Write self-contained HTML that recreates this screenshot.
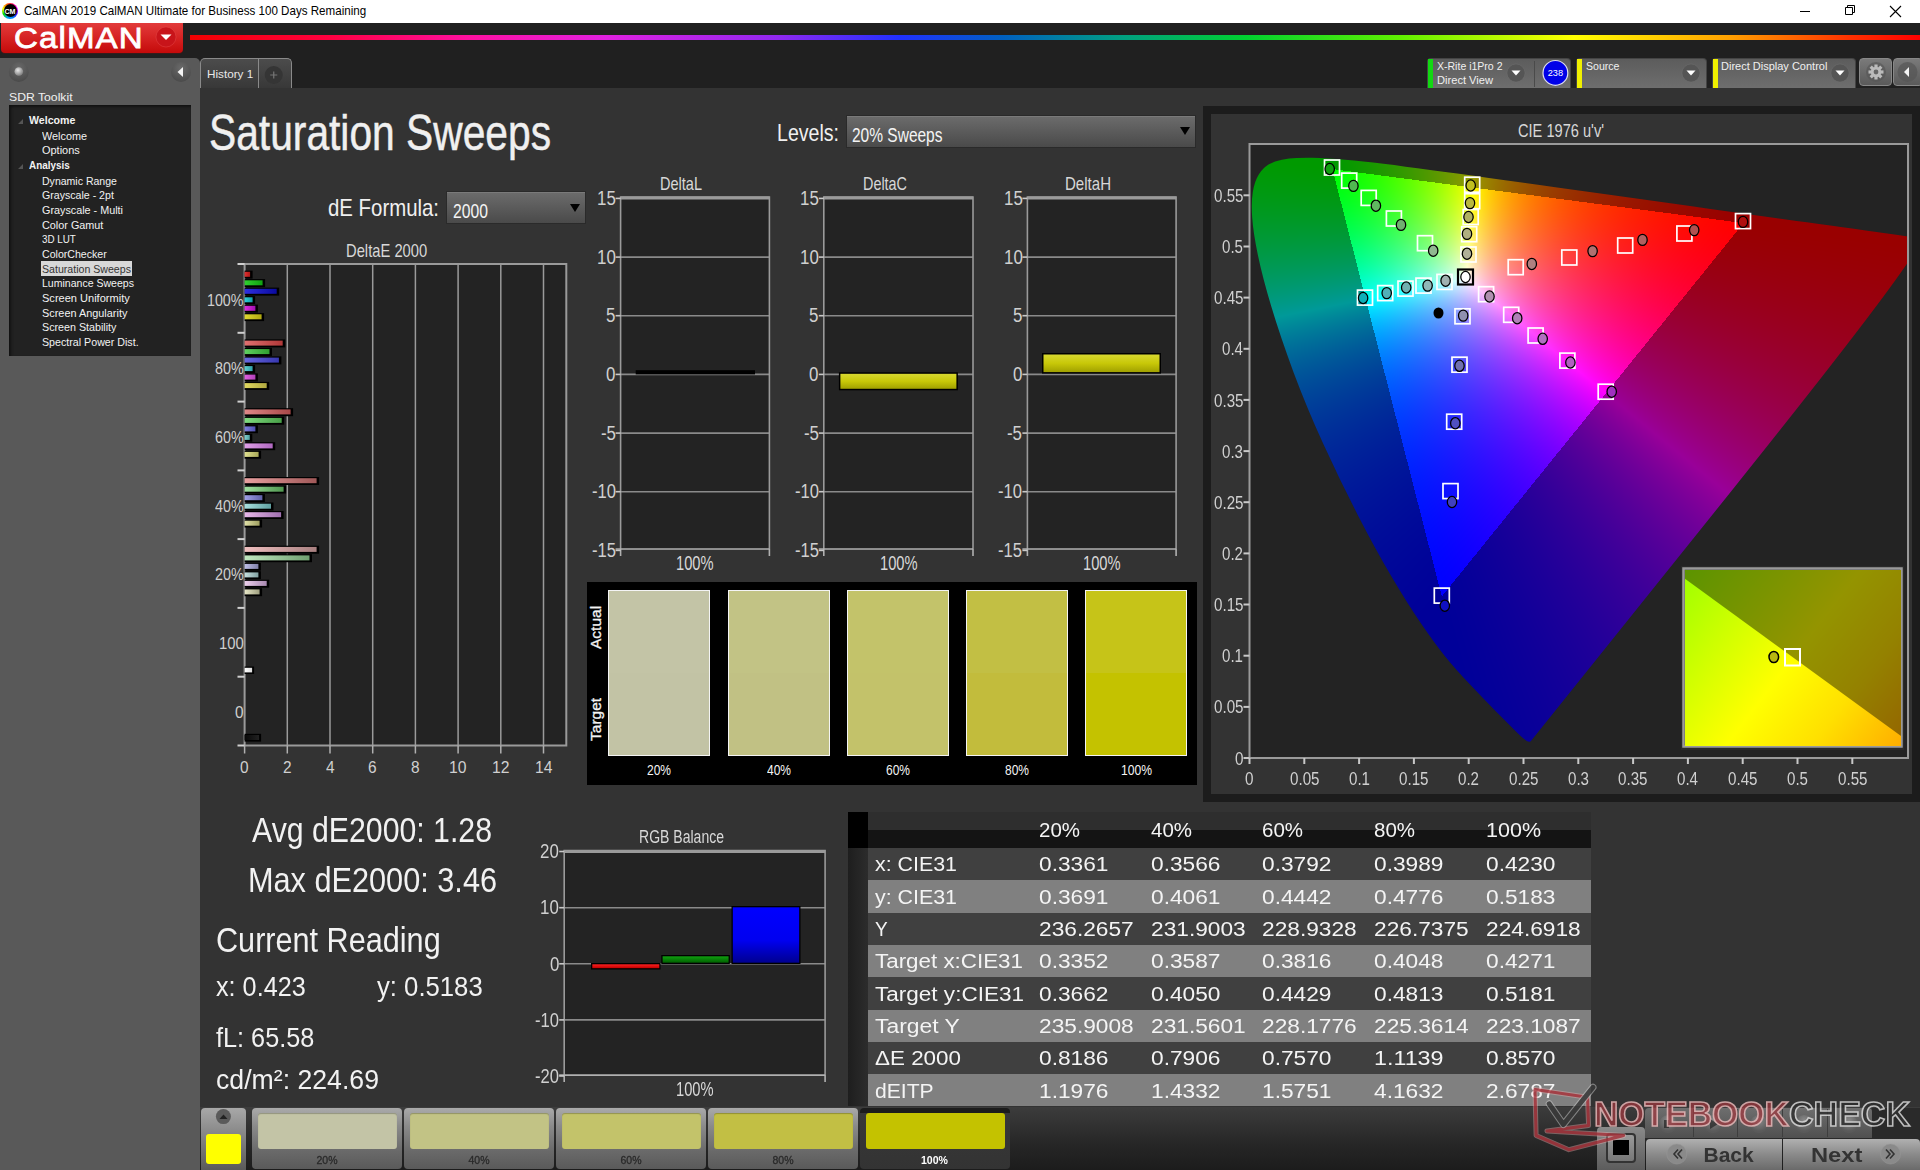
<!DOCTYPE html>
<html><head><meta charset="utf-8">
<style>
*{margin:0;padding:0;box-sizing:border-box}
html,body{width:1920px;height:1170px;overflow:hidden;background:#202020;font-family:"Liberation Sans",sans-serif;color:#eee;position:relative}
.a{position:absolute}
.t{position:absolute;white-space:nowrap;line-height:1}
svg{position:absolute;overflow:visible}
</style></head><body>
<div class="a" style="left:0px;top:0px;width:1920px;height:23px;background:#fff;"></div>
<div class="a" style="left:2px;top:2.8px;width:16px;height:16px;border-radius:50%;background:conic-gradient(from 200deg,#00a0ff,#00e000,#ffff00,#ff6000,#ff0060,#ff00ff,#4000ff,#0080ff,#00a0ff)"></div>
<div class="a" style="left:3.5px;top:4.3px;width:13px;height:13px;border-radius:50%;background:#000"></div>
<svg style="left:0;top:0" width="24" height="23"><text x="10" y="13.8" font-size="7.2" font-weight="bold" fill="#fff" text-anchor="middle" font-family="Liberation Sans" textLength="11" lengthAdjust="spacingAndGlyphs">CM</text></svg>
<div class="t" style="left:23.5px;top:5.3px;font-size:12.2px;color:#000;transform:scaleX(0.9513);transform-origin:0 0;">CalMAN 2019 CalMAN Ultimate for Business 100 Days Remaining</div>
<svg style="left:1790px;top:0" width="130" height="23"><path d="M10 11.5h10" stroke="#000" stroke-width="1"/><path d="M55.5 7.5h7v7h-7z M57.5 7.5v-2h7v7h-2" fill="none" stroke="#000" stroke-width="1"/><path d="M100 6l11 11M111 6l-11 11" stroke="#000" stroke-width="1.1"/></svg>
<div class="a" style="left:0px;top:23px;width:1920px;height:35px;background:#202020;"></div>
<div class="a" style="left:1px;top:23px;width:182px;height:30px;border-radius:0 0 4px 4px;background:linear-gradient(#e23b3b,#d42020 55%,#c40a0a);box-shadow:0 1px 0 #3a1a1a"></div>
<div class="t" style="left:13.8px;top:22.7px;font-size:30px;color:#fff;transform:scaleX(1.1013);transform-origin:0 0;letter-spacing:1px;-webkit-text-stroke:0.8px #fff;">CalMAN</div>
<svg style="left:155px;top:26px" width="22" height="22"><circle cx="11" cy="11" r="10" fill="#c8141a"/><circle cx="11" cy="11" r="10" fill="none" stroke="#e85050" stroke-width="0.8" opacity=".5"/><path d="M5.5 8.5h11l-5.5 5.5z" fill="#fff"/></svg>
<div class="a" style="left:190px;top:35px;width:1730px;height:5px;background:linear-gradient(90deg,#f00000 0%,#ff0040 8%,#ff10a0 16%,#e020e0 24%,#9028f0 34%,#2030ff 41%,#0060c0 47%,#00a080 54%,#00d030 61%,#60f000 70%,#ffff00 80%,#ffa000 89%,#ff3000 96%,#ff0000 100%)"></div>
<div class="a" style="left:0;top:58px;width:200px;height:1112px;background:#595959;border-radius:0 5px 0 0"></div>
<svg style="left:0;top:58px" width="200" height="30"><defs><radialGradient id="btn" cx=".5" cy=".3" r=".7"><stop offset="0" stop-color="#6a6a6a"/><stop offset="1" stop-color="#4a4a4a"/></radialGradient><radialGradient id="ball" cx=".4" cy=".35" r=".6"><stop offset="0" stop-color="#e8e8e8"/><stop offset="1" stop-color="#888"/></radialGradient></defs><circle cx="18.8" cy="14" r="10" fill="url(#btn)"/><circle cx="18.8" cy="13.5" r="4.3" fill="url(#ball)"/><circle cx="181" cy="14" r="10" fill="url(#btn)"/><path d="M177.5 14l5.5-5v10z" fill="#f4f4f4"/></svg>
<div class="t" style="left:9.0px;top:90.7px;font-size:11.6px;color:#f0f0f0;transform:scaleX(1.0532);transform-origin:0 0;">SDR Toolkit</div>
<div class="a" style="left:9px;top:105px;width:182px;height:251px;background:#222;box-shadow:inset 2px 2px 3px #111"></div>
<svg style="left:17px;top:116px" width="10" height="60"><path d="M1 8l5-5v5z M1 53l5-5v5z" fill="#555"/></svg>
<div class="t" style="left:29.0px;top:115.0px;font-size:10.6px;color:#f2f2f2;font-weight:bold;">Welcome</div>
<div class="t" style="left:42.0px;top:131.0px;font-size:10.6px;color:#f2f2f2;transform:scaleX(1.0231);transform-origin:0 0;">Welcome</div>
<div class="t" style="left:42.0px;top:145.0px;font-size:10.6px;color:#f2f2f2;transform:scaleX(1.0347);transform-origin:0 0;">Options</div>
<div class="t" style="left:29.0px;top:160.0px;font-size:10.6px;color:#f2f2f2;font-weight:bold;transform:scaleX(0.9335);transform-origin:0 0;">Analysis</div>
<div class="t" style="left:42.0px;top:176.0px;font-size:10.6px;color:#f2f2f2;transform:scaleX(0.9945);transform-origin:0 0;">Dynamic Range</div>
<div class="t" style="left:42.0px;top:190.3px;font-size:10.6px;color:#f2f2f2;">Grayscale - 2pt</div>
<div class="t" style="left:42.0px;top:205.0px;font-size:10.6px;color:#f2f2f2;transform:scaleX(1.0186);transform-origin:0 0;">Grayscale - Multi</div>
<div class="t" style="left:42.0px;top:219.9px;font-size:10.6px;color:#f2f2f2;transform:scaleX(1.0219);transform-origin:0 0;">Color Gamut</div>
<div class="t" style="left:42.0px;top:233.9px;font-size:10.6px;color:#f2f2f2;transform:scaleX(0.9255);transform-origin:0 0;">3D LUT</div>
<div class="t" style="left:42.0px;top:248.8px;font-size:10.6px;color:#f2f2f2;">ColorChecker</div>
<div class="a" style="left:41px;top:261px;width:91px;height:15px;background:#d8d8d8;"></div>
<div class="t" style="left:42.0px;top:263.9px;font-size:10.6px;color:#333;">Saturation Sweeps</div>
<div class="t" style="left:42.0px;top:278.0px;font-size:10.6px;color:#f2f2f2;transform:scaleX(0.9944);transform-origin:0 0;">Luminance Sweeps</div>
<div class="t" style="left:42.0px;top:292.8px;font-size:10.6px;color:#f2f2f2;transform:scaleX(1.0423);transform-origin:0 0;">Screen Uniformity</div>
<div class="t" style="left:42.0px;top:307.7px;font-size:10.6px;color:#f2f2f2;transform:scaleX(1.0279);transform-origin:0 0;">Screen Angularity</div>
<div class="t" style="left:42.0px;top:322.0px;font-size:10.6px;color:#f2f2f2;transform:scaleX(1.0116);transform-origin:0 0;">Screen Stability</div>
<div class="t" style="left:42.0px;top:336.6px;font-size:10.6px;color:#f2f2f2;transform:scaleX(1.0070);transform-origin:0 0;">Spectral Power Dist.</div>
<div class="a" style="left:200px;top:58px;width:92px;height:30px;background:linear-gradient(#4c4c4c,#383838);border:1px solid #8a8a8a;border-bottom:none;border-radius:5px 5px 0 0"></div>
<div class="a" style="left:258px;top:59px;width:1px;height:29px;background:#8a8a8a;"></div>
<div class="t" style="left:206.6px;top:68.5px;font-size:11.3px;color:#e8e8e8;transform:scaleX(1.0363);transform-origin:0 0;">History 1</div>
<svg style="left:264px;top:65px" width="20" height="20"><circle cx="9.75" cy="10" r="9" fill="#353535"/><path d="M9.75 6.5v7M6.25 10h7" stroke="#777" stroke-width="1.2"/></svg>
<div class="a" style="left:1427px;top:58px;width:144px;height:30px;background:linear-gradient(#5c5c5c,#6e6e6e);border-radius:4px 4px 0 0;border:1px solid #444;border-bottom:none"></div>
<div class="a" style="left:1428px;top:59px;width:5px;height:29px;background:#12d812;"></div>
<svg style="left:1504.5px;top:62px" width="22" height="22"><circle cx="11" cy="11" r="9" fill="#555"/><circle cx="11" cy="11" r="9" fill="none" stroke="#777" stroke-width=".6" opacity=".6"/><path d="M6.5 8.5h9l-4.5 5z" fill="#fff"/></svg>
<div class="a" style="left:1534px;top:61px;width:1px;height:26px;background:#4a4a4a;"></div>
<svg style="left:1541px;top:59px" width="30" height="28"><circle cx="14.4" cy="13.9" r="12.4" fill="#0000e8" stroke="#dde" stroke-width="1.2"/><text x="14.4" y="17.3" font-size="9.2" fill="#fff" text-anchor="middle" font-family="Liberation Sans">238</text></svg>
<div class="t" style="left:1437.0px;top:61.2px;font-size:11px;color:#f0f0f0;transform:scaleX(0.9566);transform-origin:0 0;">X-Rite i1Pro 2</div>
<div class="t" style="left:1437.0px;top:74.7px;font-size:11px;color:#f0f0f0;transform:scaleX(1.0104);transform-origin:0 0;">Direct View</div>
<div class="a" style="left:1576px;top:58px;width:131px;height:30px;background:linear-gradient(#5c5c5c,#6e6e6e);border-radius:4px 4px 0 0;border:1px solid #444;border-bottom:none"></div>
<div class="a" style="left:1577px;top:59px;width:5px;height:29px;background:#f0f000;"></div>
<svg style="left:1679.5px;top:62px" width="22" height="22"><circle cx="11" cy="11" r="9" fill="#555"/><circle cx="11" cy="11" r="9" fill="none" stroke="#777" stroke-width=".6" opacity=".6"/><path d="M6.5 8.5h9l-4.5 5z" fill="#fff"/></svg>
<div class="t" style="left:1585.5px;top:61.2px;font-size:11px;color:#f0f0f0;transform:scaleX(0.9611);transform-origin:0 0;">Source</div>
<div class="a" style="left:1712px;top:58px;width:144px;height:30px;background:linear-gradient(#5c5c5c,#6e6e6e);border-radius:4px 4px 0 0;border:1px solid #444;border-bottom:none"></div>
<div class="a" style="left:1713px;top:59px;width:5px;height:29px;background:#f0f000;"></div>
<svg style="left:1828.5px;top:62px" width="22" height="22"><circle cx="11" cy="11" r="9" fill="#555"/><circle cx="11" cy="11" r="9" fill="none" stroke="#777" stroke-width=".6" opacity=".6"/><path d="M6.5 8.5h9l-4.5 5z" fill="#fff"/></svg>
<div class="t" style="left:1721.0px;top:61.2px;font-size:11px;color:#f0f0f0;">Direct Display Control</div>
<div class="a" style="left:1859px;top:58px;width:33px;height:28px;background:linear-gradient(#7a7a7a,#5a5a5a);border:1px solid #888;border-radius:4px"></div>
<svg style="left:1862px;top:59px" width="28" height="28"><circle cx="14" cy="13" r="10" fill="#555" opacity=".6"/><g transform="translate(14 13)" fill="#bbb"><circle r="5.2"/><g id="tth"><rect x="-1.6" y="-7.5" width="3.2" height="3.4"/></g><use href="#tth" transform="rotate(45)"/><use href="#tth" transform="rotate(90)"/><use href="#tth" transform="rotate(135)"/><use href="#tth" transform="rotate(180)"/><use href="#tth" transform="rotate(225)"/><use href="#tth" transform="rotate(270)"/><use href="#tth" transform="rotate(315)"/><circle r="2.4" fill="#666"/></g></svg>
<div class="a" style="left:1893px;top:58px;width:30px;height:28px;background:linear-gradient(#7a7a7a,#5a5a5a);border:1px solid #888;border-radius:4px"></div>
<svg style="left:1895px;top:59px" width="25" height="28"><circle cx="12.5" cy="13" r="10" fill="#555" opacity=".7"/><path d="M9 13l5-5v10z" fill="#f4f4f4"/></svg>
<div class="a" style="left:200px;top:88px;width:1720px;height:1019px;background:#333"></div>
<div class="t" style="left:208.5px;top:107.7px;font-size:50.5px;color:#f0f0f0;transform:scaleX(0.8068);transform-origin:0 0;-webkit-text-stroke:0.5px #f0f0f0;">Saturation Sweeps</div>
<div class="t" style="left:328.0px;top:196.3px;font-size:24px;color:#f0f0f0;transform:scaleX(0.8492);transform-origin:0 0;">dE Formula:</div>
<div class="a" style="left:446px;top:191px;width:140px;height:33px;background:linear-gradient(#6c6c6c,#4a4a4a);border:1px solid #2a2a2a;box-shadow:inset 0 1px 0 #7a7a7a"></div>
<div class="t" style="left:452.5px;top:202.0px;font-size:19.6px;color:#f4f4f4;transform:scaleX(0.8027);transform-origin:0 0;">2000</div>
<svg style="left:569px;top:203px" width="12" height="10"><path d="M1 1h10l-5 8z" fill="#000"/></svg>
<div class="t" style="left:776.9px;top:120.7px;font-size:24px;color:#f0f0f0;transform:scaleX(0.8153);transform-origin:0 0;">Levels:</div>
<div class="a" style="left:846px;top:115px;width:350px;height:33px;background:linear-gradient(#6c6c6c,#4a4a4a);border:1px solid #2a2a2a;box-shadow:inset 0 1px 0 #7a7a7a"></div>
<div class="t" style="left:852.3px;top:125.0px;font-size:20px;color:#f4f4f4;transform:scaleX(0.7752);transform-origin:0 0;">20% Sweeps</div>
<svg style="left:1179px;top:126px" width="12" height="10"><path d="M1 1h10l-5 8z" fill="#000"/></svg>
<div class="t" style="left:346.3px;top:242.9px;font-size:17.9px;color:#d8d8d8;transform:scaleX(0.8247);transform-origin:0 0;">DeltaE 2000</div>
<svg style="left:0;top:0" width="1920" height="1170"><rect x="244.6" y="264" width="321.69999999999993" height="481.5" fill="#232323"/><path d="M287.3 264V745.5" stroke="#9a9a9a" stroke-width="1.5"/><path d="M330.0 264V745.5" stroke="#9a9a9a" stroke-width="1.5"/><path d="M372.7 264V745.5" stroke="#9a9a9a" stroke-width="1.5"/><path d="M415.4 264V745.5" stroke="#9a9a9a" stroke-width="1.5"/><path d="M458.1 264V745.5" stroke="#9a9a9a" stroke-width="1.5"/><path d="M500.8 264V745.5" stroke="#9a9a9a" stroke-width="1.5"/><path d="M543.5 264V745.5" stroke="#9a9a9a" stroke-width="1.5"/><path d="M244.6 264H566.3V745.5H244.6Z" fill="none" stroke="#9a9a9a" stroke-width="2"/><path d="M237.5 264.0H244.6" stroke="#d0d0d0" stroke-width="2"/><path d="M237.5 332.8H244.6" stroke="#d0d0d0" stroke-width="2"/><path d="M237.5 401.6H244.6" stroke="#d0d0d0" stroke-width="2"/><path d="M237.5 470.4H244.6" stroke="#d0d0d0" stroke-width="2"/><path d="M237.5 539.1H244.6" stroke="#d0d0d0" stroke-width="2"/><path d="M237.5 607.9H244.6" stroke="#d0d0d0" stroke-width="2"/><path d="M237.5 676.7H244.6" stroke="#d0d0d0" stroke-width="2"/><path d="M237.5 745.5H244.6" stroke="#d0d0d0" stroke-width="2"/><path d="M244.6 745.5v8" stroke="#b0b0b0" stroke-width="1.5"/><path d="M287.3 745.5v8" stroke="#b0b0b0" stroke-width="1.5"/><path d="M330.0 745.5v8" stroke="#b0b0b0" stroke-width="1.5"/><path d="M372.7 745.5v8" stroke="#b0b0b0" stroke-width="1.5"/><path d="M415.4 745.5v8" stroke="#b0b0b0" stroke-width="1.5"/><path d="M458.1 745.5v8" stroke="#b0b0b0" stroke-width="1.5"/><path d="M500.8 745.5v8" stroke="#b0b0b0" stroke-width="1.5"/><path d="M543.5 745.5v8" stroke="#b0b0b0" stroke-width="1.5"/><defs><linearGradient id="bg00" x1="0" x2="1" y1="0" y2="0"><stop offset="0" stop-color="#e03030"/><stop offset="1" stop-color="#b01818"/></linearGradient><linearGradient id="bg01" x1="0" x2="1" y1="0" y2="0"><stop offset="0" stop-color="#30d030"/><stop offset="1" stop-color="#10a010"/></linearGradient><linearGradient id="bg02" x1="0" x2="1" y1="0" y2="0"><stop offset="0" stop-color="#3030e0"/><stop offset="1" stop-color="#0a0aa0"/></linearGradient><linearGradient id="bg03" x1="0" x2="1" y1="0" y2="0"><stop offset="0" stop-color="#30d0d8"/><stop offset="1" stop-color="#10a0a8"/></linearGradient><linearGradient id="bg04" x1="0" x2="1" y1="0" y2="0"><stop offset="0" stop-color="#e030e0"/><stop offset="1" stop-color="#a010b0"/></linearGradient><linearGradient id="bg05" x1="0" x2="1" y1="0" y2="0"><stop offset="0" stop-color="#e0d830"/><stop offset="1" stop-color="#b0a810"/></linearGradient><linearGradient id="bg10" x1="0" x2="1" y1="0" y2="0"><stop offset="0" stop-color="#e07070"/><stop offset="1" stop-color="#b03838"/></linearGradient><linearGradient id="bg11" x1="0" x2="1" y1="0" y2="0"><stop offset="0" stop-color="#60d060"/><stop offset="1" stop-color="#30a030"/></linearGradient><linearGradient id="bg12" x1="0" x2="1" y1="0" y2="0"><stop offset="0" stop-color="#6868e0"/><stop offset="1" stop-color="#3838b0"/></linearGradient><linearGradient id="bg13" x1="0" x2="1" y1="0" y2="0"><stop offset="0" stop-color="#60d0d0"/><stop offset="1" stop-color="#30a0a8"/></linearGradient><linearGradient id="bg14" x1="0" x2="1" y1="0" y2="0"><stop offset="0" stop-color="#e060e0"/><stop offset="1" stop-color="#b040b8"/></linearGradient><linearGradient id="bg15" x1="0" x2="1" y1="0" y2="0"><stop offset="0" stop-color="#e0d860"/><stop offset="1" stop-color="#b0a840"/></linearGradient><linearGradient id="bg20" x1="0" x2="1" y1="0" y2="0"><stop offset="0" stop-color="#e08888"/><stop offset="1" stop-color="#a84848"/></linearGradient><linearGradient id="bg21" x1="0" x2="1" y1="0" y2="0"><stop offset="0" stop-color="#80dc80"/><stop offset="1" stop-color="#48a048"/></linearGradient><linearGradient id="bg22" x1="0" x2="1" y1="0" y2="0"><stop offset="0" stop-color="#8080e0"/><stop offset="1" stop-color="#5050b0"/></linearGradient><linearGradient id="bg23" x1="0" x2="1" y1="0" y2="0"><stop offset="0" stop-color="#80d0d0"/><stop offset="1" stop-color="#50a0a0"/></linearGradient><linearGradient id="bg24" x1="0" x2="1" y1="0" y2="0"><stop offset="0" stop-color="#e0a0e8"/><stop offset="1" stop-color="#b068c0"/></linearGradient><linearGradient id="bg25" x1="0" x2="1" y1="0" y2="0"><stop offset="0" stop-color="#e0e090"/><stop offset="1" stop-color="#a8a858"/></linearGradient><linearGradient id="bg30" x1="0" x2="1" y1="0" y2="0"><stop offset="0" stop-color="#e8a0a0"/><stop offset="1" stop-color="#a05858"/></linearGradient><linearGradient id="bg31" x1="0" x2="1" y1="0" y2="0"><stop offset="0" stop-color="#a0e0a0"/><stop offset="1" stop-color="#509850"/></linearGradient><linearGradient id="bg32" x1="0" x2="1" y1="0" y2="0"><stop offset="0" stop-color="#a0a0e8"/><stop offset="1" stop-color="#6060a8"/></linearGradient><linearGradient id="bg33" x1="0" x2="1" y1="0" y2="0"><stop offset="0" stop-color="#a8e0e0"/><stop offset="1" stop-color="#60a0a0"/></linearGradient><linearGradient id="bg34" x1="0" x2="1" y1="0" y2="0"><stop offset="0" stop-color="#e8b8e8"/><stop offset="1" stop-color="#a070b0"/></linearGradient><linearGradient id="bg35" x1="0" x2="1" y1="0" y2="0"><stop offset="0" stop-color="#e0e0a8"/><stop offset="1" stop-color="#a0a060"/></linearGradient><linearGradient id="bg40" x1="0" x2="1" y1="0" y2="0"><stop offset="0" stop-color="#f0c0c0"/><stop offset="1" stop-color="#a88080"/></linearGradient><linearGradient id="bg41" x1="0" x2="1" y1="0" y2="0"><stop offset="0" stop-color="#c0e8c0"/><stop offset="1" stop-color="#70a070"/></linearGradient><linearGradient id="bg42" x1="0" x2="1" y1="0" y2="0"><stop offset="0" stop-color="#c0c0e8"/><stop offset="1" stop-color="#8080a8"/></linearGradient><linearGradient id="bg43" x1="0" x2="1" y1="0" y2="0"><stop offset="0" stop-color="#c8e0e0"/><stop offset="1" stop-color="#80a0a0"/></linearGradient><linearGradient id="bg44" x1="0" x2="1" y1="0" y2="0"><stop offset="0" stop-color="#ecd0ec"/><stop offset="1" stop-color="#a888b0"/></linearGradient><linearGradient id="bg45" x1="0" x2="1" y1="0" y2="0"><stop offset="0" stop-color="#e8e8c8"/><stop offset="1" stop-color="#a0a080"/></linearGradient><linearGradient id="bgw"><stop offset="0" stop-color="#fff"/><stop offset="1" stop-color="#ddd"/></linearGradient><linearGradient id="bgk"><stop offset="0" stop-color="#080808"/><stop offset="1" stop-color="#222"/></linearGradient></defs><rect x="244.6" y="270.6" width="8.0" height="8" fill="#000"/><rect x="244.6" y="271.8" width="5.5" height="5" fill="url(#bg00)"/><rect x="244.6" y="279.1" width="20.5" height="8" fill="#000"/><rect x="244.6" y="280.3" width="18.0" height="5" fill="url(#bg01)"/><rect x="244.6" y="287.6" width="34.6" height="8" fill="#000"/><rect x="244.6" y="288.8" width="32.1" height="5" fill="url(#bg02)"/><rect x="244.6" y="296.1" width="10.5" height="8" fill="#000"/><rect x="244.6" y="297.3" width="8.0" height="5" fill="url(#bg03)"/><rect x="244.6" y="304.6" width="13.3" height="8" fill="#000"/><rect x="244.6" y="305.8" width="10.8" height="5" fill="url(#bg04)"/><rect x="244.6" y="313.1" width="19.5" height="8" fill="#000"/><rect x="244.6" y="314.3" width="17.0" height="5" fill="url(#bg05)"/><rect x="244.6" y="339.4" width="40.6" height="8" fill="#000"/><rect x="244.6" y="340.6" width="38.1" height="5" fill="url(#bg10)"/><rect x="244.6" y="347.9" width="27.4" height="8" fill="#000"/><rect x="244.6" y="349.1" width="24.9" height="5" fill="url(#bg11)"/><rect x="244.6" y="356.4" width="36.8" height="8" fill="#000"/><rect x="244.6" y="357.6" width="34.3" height="5" fill="url(#bg12)"/><rect x="244.6" y="364.9" width="10.5" height="8" fill="#000"/><rect x="244.6" y="366.1" width="8.0" height="5" fill="url(#bg13)"/><rect x="244.6" y="373.4" width="13.3" height="8" fill="#000"/><rect x="244.6" y="374.6" width="10.8" height="5" fill="url(#bg14)"/><rect x="244.6" y="381.9" width="24.6" height="8" fill="#000"/><rect x="244.6" y="383.1" width="22.1" height="5" fill="url(#bg15)"/><rect x="244.6" y="408.2" width="48.5" height="8" fill="#000"/><rect x="244.6" y="409.4" width="46.0" height="5" fill="url(#bg20)"/><rect x="244.6" y="416.7" width="39.6" height="8" fill="#000"/><rect x="244.6" y="417.9" width="37.1" height="5" fill="url(#bg21)"/><rect x="244.6" y="425.2" width="13.3" height="8" fill="#000"/><rect x="244.6" y="426.4" width="10.8" height="5" fill="url(#bg22)"/><rect x="244.6" y="433.7" width="7.7" height="8" fill="#000"/><rect x="244.6" y="434.9" width="5.2" height="5" fill="url(#bg23)"/><rect x="244.6" y="442.2" width="30.6" height="8" fill="#000"/><rect x="244.6" y="443.4" width="28.1" height="5" fill="url(#bg24)"/><rect x="244.6" y="450.7" width="16.5" height="8" fill="#000"/><rect x="244.6" y="451.9" width="14.0" height="5" fill="url(#bg25)"/><rect x="244.6" y="477.0" width="74.5" height="8" fill="#000"/><rect x="244.6" y="478.2" width="72.0" height="5" fill="url(#bg30)"/><rect x="244.6" y="485.5" width="41.5" height="8" fill="#000"/><rect x="244.6" y="486.7" width="39.0" height="5" fill="url(#bg31)"/><rect x="244.6" y="494.0" width="20.3" height="8" fill="#000"/><rect x="244.6" y="495.2" width="17.8" height="5" fill="url(#bg32)"/><rect x="244.6" y="502.5" width="28.9" height="8" fill="#000"/><rect x="244.6" y="503.7" width="26.4" height="5" fill="url(#bg33)"/><rect x="244.6" y="511.0" width="39.0" height="8" fill="#000"/><rect x="244.6" y="512.2" width="36.5" height="5" fill="url(#bg34)"/><rect x="244.6" y="519.5" width="17.5" height="8" fill="#000"/><rect x="244.6" y="520.7" width="15.0" height="5" fill="url(#bg35)"/><rect x="244.6" y="545.7" width="74.5" height="8" fill="#000"/><rect x="244.6" y="546.9" width="72.0" height="5" fill="url(#bg40)"/><rect x="244.6" y="554.2" width="67.4" height="8" fill="#000"/><rect x="244.6" y="555.4" width="64.9" height="5" fill="url(#bg41)"/><rect x="244.6" y="562.7" width="16.3" height="8" fill="#000"/><rect x="244.6" y="563.9" width="13.8" height="5" fill="url(#bg42)"/><rect x="244.6" y="571.2" width="16.3" height="8" fill="#000"/><rect x="244.6" y="572.4" width="13.8" height="5" fill="url(#bg43)"/><rect x="244.6" y="579.7" width="24.6" height="8" fill="#000"/><rect x="244.6" y="580.9" width="22.1" height="5" fill="url(#bg44)"/><rect x="244.6" y="588.2" width="17.5" height="8" fill="#000"/><rect x="244.6" y="589.4" width="15.0" height="5" fill="url(#bg45)"/><rect x="244.6" y="666.5" width="9.5" height="7.5" fill="#000"/><rect x="244.6" y="667.8" width="7.5" height="4.6" fill="url(#bgw)"/><rect x="244.6" y="733.8" width="16.5" height="7.8" fill="#000"/><rect x="244.6" y="735" width="14.5" height="5" fill="url(#bgk)"/></svg>
<div class="t" style="left:207.1px;top:292.5px;font-size:16.8px;color:#d0d0d0;transform:scaleX(0.8495);transform-origin:0 0;">100%</div>
<div class="t" style="left:214.9px;top:361.2px;font-size:16.8px;color:#d0d0d0;transform:scaleX(0.8535);transform-origin:0 0;">80%</div>
<div class="t" style="left:214.9px;top:429.9px;font-size:16.8px;color:#d0d0d0;transform:scaleX(0.8535);transform-origin:0 0;">60%</div>
<div class="t" style="left:214.9px;top:498.6px;font-size:16.8px;color:#d0d0d0;transform:scaleX(0.8535);transform-origin:0 0;">40%</div>
<div class="t" style="left:214.9px;top:567.3px;font-size:16.8px;color:#d0d0d0;transform:scaleX(0.8535);transform-origin:0 0;">20%</div>
<div class="t" style="left:218.8px;top:636.0px;font-size:16.8px;color:#d0d0d0;transform:scaleX(0.8847);transform-origin:0 0;">100</div>
<div class="t" style="left:235.0px;top:704.7px;font-size:16.8px;color:#d0d0d0;transform:scaleX(0.9204);transform-origin:0 0;">0</div>
<div class="t" style="left:240.3px;top:760.0px;font-size:16.8px;color:#d0d0d0;transform:scaleX(0.9204);transform-origin:0 0;">0</div>
<div class="t" style="left:283.0px;top:760.0px;font-size:16.8px;color:#d0d0d0;transform:scaleX(0.9204);transform-origin:0 0;">2</div>
<div class="t" style="left:325.7px;top:760.0px;font-size:16.8px;color:#d0d0d0;transform:scaleX(0.9204);transform-origin:0 0;">4</div>
<div class="t" style="left:368.4px;top:760.0px;font-size:16.8px;color:#d0d0d0;transform:scaleX(0.9204);transform-origin:0 0;">6</div>
<div class="t" style="left:411.1px;top:760.0px;font-size:16.8px;color:#d0d0d0;transform:scaleX(0.9204);transform-origin:0 0;">8</div>
<div class="t" style="left:449.4px;top:760.0px;font-size:16.8px;color:#d0d0d0;transform:scaleX(0.9365);transform-origin:0 0;">10</div>
<div class="t" style="left:492.1px;top:760.0px;font-size:16.8px;color:#d0d0d0;transform:scaleX(0.9365);transform-origin:0 0;">12</div>
<div class="t" style="left:534.8px;top:760.0px;font-size:16.8px;color:#d0d0d0;transform:scaleX(0.9365);transform-origin:0 0;">14</div>
<div class="t" style="left:660.4px;top:175.2px;font-size:18.5px;color:#d8d8d8;transform:scaleX(0.7854);transform-origin:0 0;">DeltaL</div>
<svg style="left:0;top:0" width="1920" height="1170"><rect x="620.6" y="197" width="148.79999999999995" height="352" fill="#232323"/><path d="M620.6 257.1H769.4" stroke="#8a8a8a" stroke-width="1.6"/><path d="M620.6 315.7H769.4" stroke="#8a8a8a" stroke-width="1.6"/><path d="M620.6 374.4H769.4" stroke="#8a8a8a" stroke-width="1.6"/><path d="M620.6 433.1H769.4" stroke="#8a8a8a" stroke-width="1.6"/><path d="M620.6 491.7H769.4" stroke="#8a8a8a" stroke-width="1.6"/><path d="M620.6 549V197H769.4V549" fill="none" stroke="#9a9a9a" stroke-width="1.6"/><path d="M620.6 198H769.4" stroke="#9a9a9a" stroke-width="3"/><path d="M615.6 549H769.4" stroke="#b0b0b0" stroke-width="1.6"/><path d="M620.6 549v7M769.4 549v7" stroke="#b0b0b0" stroke-width="1.6"/><path d="M615.6 198.4H620.6" stroke="#c8c8c8" stroke-width="1.6"/><path d="M615.6 257.1H620.6" stroke="#c8c8c8" stroke-width="1.6"/><path d="M615.6 315.7H620.6" stroke="#c8c8c8" stroke-width="1.6"/><path d="M615.6 374.4H620.6" stroke="#c8c8c8" stroke-width="1.6"/><path d="M615.6 433.1H620.6" stroke="#c8c8c8" stroke-width="1.6"/><path d="M615.6 491.7H620.6" stroke="#c8c8c8" stroke-width="1.6"/><path d="M615.6 550.4H620.6" stroke="#c8c8c8" stroke-width="1.6"/><rect x="635.7" y="370.2" width="119.29999999999995" height="4.199999999999989" fill="#000"/></svg>
<div class="t" style="left:596.8px;top:189.1px;font-size:19.5px;color:#d0d0d0;transform:scaleX(0.8667);transform-origin:0 0;">15</div>
<div class="t" style="left:596.8px;top:247.8px;font-size:19.5px;color:#d0d0d0;transform:scaleX(0.8667);transform-origin:0 0;">10</div>
<div class="t" style="left:606.2px;top:306.4px;font-size:19.5px;color:#d0d0d0;transform:scaleX(0.8667);transform-origin:0 0;">5</div>
<div class="t" style="left:606.2px;top:365.1px;font-size:19.5px;color:#d0d0d0;transform:scaleX(0.8667);transform-origin:0 0;">0</div>
<div class="t" style="left:600.6px;top:423.8px;font-size:19.5px;color:#d0d0d0;transform:scaleX(0.8651);transform-origin:0 0;">-5</div>
<div class="t" style="left:591.6px;top:482.4px;font-size:19.5px;color:#d0d0d0;transform:scaleX(0.8515);transform-origin:0 0;">-10</div>
<div class="t" style="left:591.6px;top:541.1px;font-size:19.5px;color:#d0d0d0;transform:scaleX(0.8515);transform-origin:0 0;">-15</div>
<div class="t" style="left:676.2px;top:553.5px;font-size:19.5px;color:#d8d8d8;transform:scaleX(0.7539);transform-origin:0 0;">100%</div>
<div class="t" style="left:862.6px;top:175.2px;font-size:18.5px;color:#d8d8d8;transform:scaleX(0.7781);transform-origin:0 0;">DeltaC</div>
<svg style="left:0;top:0" width="1920" height="1170"><rect x="823.8" y="197" width="149.20000000000005" height="352" fill="#232323"/><path d="M823.8 257.1H973" stroke="#8a8a8a" stroke-width="1.6"/><path d="M823.8 315.7H973" stroke="#8a8a8a" stroke-width="1.6"/><path d="M823.8 374.4H973" stroke="#8a8a8a" stroke-width="1.6"/><path d="M823.8 433.1H973" stroke="#8a8a8a" stroke-width="1.6"/><path d="M823.8 491.7H973" stroke="#8a8a8a" stroke-width="1.6"/><path d="M823.8 549V197H973V549" fill="none" stroke="#9a9a9a" stroke-width="1.6"/><path d="M823.8 198H973" stroke="#9a9a9a" stroke-width="3"/><path d="M818.8 549H973" stroke="#b0b0b0" stroke-width="1.6"/><path d="M823.8 549v7M973 549v7" stroke="#b0b0b0" stroke-width="1.6"/><path d="M818.8 198.4H823.8" stroke="#c8c8c8" stroke-width="1.6"/><path d="M818.8 257.1H823.8" stroke="#c8c8c8" stroke-width="1.6"/><path d="M818.8 315.7H823.8" stroke="#c8c8c8" stroke-width="1.6"/><path d="M818.8 374.4H823.8" stroke="#c8c8c8" stroke-width="1.6"/><path d="M818.8 433.1H823.8" stroke="#c8c8c8" stroke-width="1.6"/><path d="M818.8 491.7H823.8" stroke="#c8c8c8" stroke-width="1.6"/><path d="M818.8 550.4H823.8" stroke="#c8c8c8" stroke-width="1.6"/><defs><linearGradient id="yb823" x1="0" x2="0" y1="0" y2="1"><stop offset="0" stop-color="#d8d830"/><stop offset=".5" stop-color="#c8c808"/><stop offset="1" stop-color="#a0a000"/></linearGradient></defs><rect x="838.9" y="372.3" width="119.0" height="18.0" fill="#000"/><rect x="840.4" y="373.8" width="116.0" height="15.0" fill="url(#yb823)"/></svg>
<div class="t" style="left:800.0px;top:189.1px;font-size:19.5px;color:#d0d0d0;transform:scaleX(0.8667);transform-origin:0 0;">15</div>
<div class="t" style="left:800.0px;top:247.8px;font-size:19.5px;color:#d0d0d0;transform:scaleX(0.8667);transform-origin:0 0;">10</div>
<div class="t" style="left:809.4px;top:306.4px;font-size:19.5px;color:#d0d0d0;transform:scaleX(0.8667);transform-origin:0 0;">5</div>
<div class="t" style="left:809.4px;top:365.1px;font-size:19.5px;color:#d0d0d0;transform:scaleX(0.8667);transform-origin:0 0;">0</div>
<div class="t" style="left:803.8px;top:423.8px;font-size:19.5px;color:#d0d0d0;transform:scaleX(0.8651);transform-origin:0 0;">-5</div>
<div class="t" style="left:794.8px;top:482.4px;font-size:19.5px;color:#d0d0d0;transform:scaleX(0.8515);transform-origin:0 0;">-10</div>
<div class="t" style="left:794.8px;top:541.1px;font-size:19.5px;color:#d0d0d0;transform:scaleX(0.8515);transform-origin:0 0;">-15</div>
<div class="t" style="left:879.6px;top:553.5px;font-size:19.5px;color:#d8d8d8;transform:scaleX(0.7539);transform-origin:0 0;">100%</div>
<div class="t" style="left:1064.7px;top:175.2px;font-size:18.5px;color:#d8d8d8;transform:scaleX(0.8134);transform-origin:0 0;">DeltaH</div>
<svg style="left:0;top:0" width="1920" height="1170"><rect x="1027.4" y="197" width="148.69999999999982" height="352" fill="#232323"/><path d="M1027.4 257.1H1176.1" stroke="#8a8a8a" stroke-width="1.6"/><path d="M1027.4 315.7H1176.1" stroke="#8a8a8a" stroke-width="1.6"/><path d="M1027.4 374.4H1176.1" stroke="#8a8a8a" stroke-width="1.6"/><path d="M1027.4 433.1H1176.1" stroke="#8a8a8a" stroke-width="1.6"/><path d="M1027.4 491.7H1176.1" stroke="#8a8a8a" stroke-width="1.6"/><path d="M1027.4 549V197H1176.1V549" fill="none" stroke="#9a9a9a" stroke-width="1.6"/><path d="M1027.4 198H1176.1" stroke="#9a9a9a" stroke-width="3"/><path d="M1022.4000000000001 549H1176.1" stroke="#b0b0b0" stroke-width="1.6"/><path d="M1027.4 549v7M1176.1 549v7" stroke="#b0b0b0" stroke-width="1.6"/><path d="M1022.4000000000001 198.4H1027.4" stroke="#c8c8c8" stroke-width="1.6"/><path d="M1022.4000000000001 257.1H1027.4" stroke="#c8c8c8" stroke-width="1.6"/><path d="M1022.4000000000001 315.7H1027.4" stroke="#c8c8c8" stroke-width="1.6"/><path d="M1022.4000000000001 374.4H1027.4" stroke="#c8c8c8" stroke-width="1.6"/><path d="M1022.4000000000001 433.1H1027.4" stroke="#c8c8c8" stroke-width="1.6"/><path d="M1022.4000000000001 491.7H1027.4" stroke="#c8c8c8" stroke-width="1.6"/><path d="M1022.4000000000001 550.4H1027.4" stroke="#c8c8c8" stroke-width="1.6"/><defs><linearGradient id="yb1027" x1="0" x2="0" y1="0" y2="1"><stop offset="0" stop-color="#d8d830"/><stop offset=".5" stop-color="#c8c808"/><stop offset="1" stop-color="#a0a000"/></linearGradient></defs><rect x="1042" y="353" width="119" height="20.600000000000023" fill="#000"/><rect x="1043.5" y="354.5" width="116" height="17.600000000000023" fill="url(#yb1027)"/></svg>
<div class="t" style="left:1003.6px;top:189.1px;font-size:19.5px;color:#d0d0d0;transform:scaleX(0.8667);transform-origin:0 0;">15</div>
<div class="t" style="left:1003.6px;top:247.8px;font-size:19.5px;color:#d0d0d0;transform:scaleX(0.8667);transform-origin:0 0;">10</div>
<div class="t" style="left:1013.0px;top:306.4px;font-size:19.5px;color:#d0d0d0;transform:scaleX(0.8667);transform-origin:0 0;">5</div>
<div class="t" style="left:1013.0px;top:365.1px;font-size:19.5px;color:#d0d0d0;transform:scaleX(0.8667);transform-origin:0 0;">0</div>
<div class="t" style="left:1007.4px;top:423.8px;font-size:19.5px;color:#d0d0d0;transform:scaleX(0.8651);transform-origin:0 0;">-5</div>
<div class="t" style="left:998.4px;top:482.4px;font-size:19.5px;color:#d0d0d0;transform:scaleX(0.8515);transform-origin:0 0;">-10</div>
<div class="t" style="left:998.4px;top:541.1px;font-size:19.5px;color:#d0d0d0;transform:scaleX(0.8515);transform-origin:0 0;">-15</div>
<div class="t" style="left:1083.0px;top:553.5px;font-size:19.5px;color:#d8d8d8;transform:scaleX(0.7539);transform-origin:0 0;">100%</div>
<div class="a" style="left:587px;top:582px;width:610px;height:203px;background:#000;"></div>
<div class="a" style="left:608.2px;top:590px;width:102px;height:166px;border:1px solid #f4f4f4;background:linear-gradient(#c3c4a6 50%,#c2c3a5 50%)"></div>
<div class="t" style="left:647.2px;top:762.3px;font-size:15px;color:#f4f4f4;transform:scaleX(0.7994);transform-origin:0 0;">20%</div>
<div class="a" style="left:727.5px;top:590px;width:102px;height:166px;border:1px solid #f4f4f4;background:linear-gradient(#c2c385 50%,#c1c184 50%)"></div>
<div class="t" style="left:766.5px;top:762.3px;font-size:15px;color:#f4f4f4;transform:scaleX(0.7994);transform-origin:0 0;">40%</div>
<div class="a" style="left:846.8px;top:590px;width:102px;height:166px;border:1px solid #f4f4f4;background:linear-gradient(#c3c36a 50%,#c3c26a 50%)"></div>
<div class="t" style="left:885.8px;top:762.3px;font-size:15px;color:#f4f4f4;transform:scaleX(0.7994);transform-origin:0 0;">60%</div>
<div class="a" style="left:966.1px;top:590px;width:102px;height:166px;border:1px solid #f4f4f4;background:linear-gradient(#c2bf44 50%,#c2bc3c 50%)"></div>
<div class="t" style="left:1005.1px;top:762.3px;font-size:15px;color:#f4f4f4;transform:scaleX(0.7994);transform-origin:0 0;">80%</div>
<div class="a" style="left:1085.4px;top:590px;width:102px;height:166px;border:1px solid #f4f4f4;background:linear-gradient(#c6c418 50%,#c4c200 50%)"></div>
<div class="t" style="left:1120.9px;top:762.3px;font-size:15px;color:#f4f4f4;transform:scaleX(0.8080);transform-origin:0 0;">100%</div>
<div class="t" style="left:588.6px;top:649px;font-size:14.5px;color:#f4f4f4;-webkit-text-stroke:0.3px #f4f4f4;transform:rotate(-90deg) scaleX(1.07);transform-origin:0 0;width:50px">Actual</div>
<div class="t" style="left:588.6px;top:741px;font-size:14.5px;color:#f4f4f4;-webkit-text-stroke:0.3px #f4f4f4;transform:rotate(-90deg) scaleX(1.07);transform-origin:0 0;width:50px">Target</div>
<div class="a" style="left:1203px;top:106px;width:717px;height:696px;background:#1c1c1c;"></div>
<div class="a" style="left:1211px;top:114px;width:701px;height:680px;background:#333;"></div>
<div class="t" style="left:1517.7px;top:122.3px;font-size:18px;color:#d8d8d8;transform:scaleX(0.8118);transform-origin:0 0;">CIE 1976 u'v'</div>
<div class="a" style="left:1249.5px;top:144px;width:658.5px;height:614.0px;background:#232323"></div>
<svg id="ciefb" style="left:0;top:0" width="1920" height="1170"><defs><clipPath id="cpl"><rect x="1249.5" y="144" width="658.5" height="614.0"/></clipPath><clipPath id="cplo"><polygon points="1531.0,741.0 1529.7,741.7 1525.9,740.7 1506.7,722.2 1455.2,668.9 1407.4,603.5 1340.3,480.9 1306.6,407.4 1280.4,336.9 1262.5,277.4 1253.3,233.1 1251.1,202.3 1254.6,181.2 1263.0,167.8 1274.8,160.9 1304.4,157.8 1336.3,158.9 1373.0,162.5 1417.3,168.1 1471.5,175.5 1537.0,184.7 1612.9,195.2 1691.7,206.3 1819.7,224.1 1932.7,239.9"/></clipPath><linearGradient id="fbo" gradientUnits="userSpaceOnUse" x1="1280" y1="180" x2="1480" y2="700"><stop offset="0" stop-color="#008a10"/><stop offset=".45" stop-color="#008a80"/><stop offset=".75" stop-color="#0010a0"/><stop offset="1" stop-color="#000090"/></linearGradient><linearGradient id="fbo2" gradientUnits="userSpaceOnUse" x1="1500" y1="650" x2="1880" y2="300"><stop offset="0" stop-color="#2000a0"/><stop offset=".4" stop-color="#800090"/><stop offset=".7" stop-color="#900050"/><stop offset="1" stop-color="#900010"/></linearGradient><linearGradient id="fbo3" gradientUnits="userSpaceOnUse" x1="1330" y1="160" x2="1740" y2="220"><stop offset="0" stop-color="#009000"/><stop offset=".35" stop-color="#609000"/><stop offset=".55" stop-color="#906000"/><stop offset="1" stop-color="#900000"/></linearGradient><linearGradient id="fbi1" gradientUnits="userSpaceOnUse" x1="1332.4672" y1="169.0589" x2="1441.7384" y2="596.4683"><stop offset="0" stop-color="#00ff00"/><stop offset=".5" stop-color="#00ffff"/><stop offset="1" stop-color="#0000ff"/></linearGradient><linearGradient id="fbi2" gradientUnits="userSpaceOnUse" x1="1387.1028000000001" y1="382.7636" x2="1743.4672" y2="223.07330000000002"><stop offset="0" stop-color="#ff00ff" stop-opacity="0"/><stop offset="1" stop-color="#ff0000"/></linearGradient><radialGradient id="fbw" gradientUnits="userSpaceOnUse" cx="1466.2888" cy="278.9291" r="90"><stop offset="0" stop-color="#fff"/><stop offset="1" stop-color="#fff" stop-opacity="0"/></radialGradient></defs><g clip-path="url(#cpl)"><g clip-path="url(#cplo)"><polygon points="1531.0,741.0 1529.7,741.7 1525.9,740.7 1506.7,722.2 1455.2,668.9 1407.4,603.5 1340.3,480.9 1306.6,407.4 1280.4,336.9 1262.5,277.4 1253.3,233.1 1251.1,202.3 1254.6,181.2 1263.0,167.8 1274.8,160.9 1304.4,157.8 1336.3,158.9 1373.0,162.5 1417.3,168.1 1471.5,175.5 1537.0,184.7 1612.9,195.2 1691.7,206.3 1819.7,224.1 1932.7,239.9" fill="url(#fbo)"/><polygon points="1441.7,596.5 1531.0,741.0 1932.7,239.9 2100.0,100.0 1743.5,223.1" fill="url(#fbo2)"/><polygon points="1332.5,169.1 1274.8,160.9 1304.4,157.8 1336.3,158.9 1373.0,162.5 1417.3,168.1 1471.5,175.5 1537.0,184.7 1612.9,195.2 1691.7,206.3 1819.7,224.1 1932.7,239.9 1743.5,223.1" fill="url(#fbo3)"/><polygon points="1332.5,169.1 1743.5,223.1 1441.7,596.5" fill="url(#fbi1)"/><polygon points="1332.5,169.1 1743.5,223.1 1441.7,596.5" fill="url(#fbi2)"/><polygon points="1332.5,169.1 1743.5,223.1 1441.7,596.5" fill="url(#fbw)"/></g></g></svg>
<canvas id="cie" class="a" style="left:1250px;top:144px" width="658" height="614"></canvas>
<svg style="left:0;top:0" width="1920" height="1170"><path d="M1249.5 758.0V144H1908V758.0H1249.5" fill="none" stroke="#9a9a9a" stroke-width="2"/><path d="M1243.5 758.0H1249.5" stroke="#c8c8c8" stroke-width="2"/><path d="M1243.5 706.9H1249.5" stroke="#c8c8c8" stroke-width="2"/><path d="M1243.5 655.7H1249.5" stroke="#c8c8c8" stroke-width="2"/><path d="M1243.5 604.5H1249.5" stroke="#c8c8c8" stroke-width="2"/><path d="M1243.5 553.4H1249.5" stroke="#c8c8c8" stroke-width="2"/><path d="M1243.5 502.2H1249.5" stroke="#c8c8c8" stroke-width="2"/><path d="M1243.5 451.1H1249.5" stroke="#c8c8c8" stroke-width="2"/><path d="M1243.5 399.9H1249.5" stroke="#c8c8c8" stroke-width="2"/><path d="M1243.5 348.8H1249.5" stroke="#c8c8c8" stroke-width="2"/><path d="M1243.5 297.6H1249.5" stroke="#c8c8c8" stroke-width="2"/><path d="M1243.5 246.5H1249.5" stroke="#c8c8c8" stroke-width="2"/><path d="M1243.5 195.3H1249.5" stroke="#c8c8c8" stroke-width="2"/><path d="M1249.5 758.0v6" stroke="#c8c8c8" stroke-width="2"/><path d="M1304.3 758.0v6" stroke="#c8c8c8" stroke-width="2"/><path d="M1359.1 758.0v6" stroke="#c8c8c8" stroke-width="2"/><path d="M1413.9 758.0v6" stroke="#c8c8c8" stroke-width="2"/><path d="M1468.7 758.0v6" stroke="#c8c8c8" stroke-width="2"/><path d="M1523.5 758.0v6" stroke="#c8c8c8" stroke-width="2"/><path d="M1578.3 758.0v6" stroke="#c8c8c8" stroke-width="2"/><path d="M1633.1 758.0v6" stroke="#c8c8c8" stroke-width="2"/><path d="M1687.9 758.0v6" stroke="#c8c8c8" stroke-width="2"/><path d="M1742.7 758.0v6" stroke="#c8c8c8" stroke-width="2"/><path d="M1797.5 758.0v6" stroke="#c8c8c8" stroke-width="2"/><path d="M1852.3 758.0v6" stroke="#c8c8c8" stroke-width="2"/></svg>
<div class="t" style="left:1234.6px;top:749.6px;font-size:18px;color:#d0d0d0;transform:scaleX(0.8491);transform-origin:0 0;">0</div>
<div class="t" style="left:1245.2px;top:770.3px;font-size:18px;color:#d0d0d0;transform:scaleX(0.8491);transform-origin:0 0;">0</div>
<div class="t" style="left:1213.6px;top:698.4px;font-size:18px;color:#d0d0d0;transform:scaleX(0.8420);transform-origin:0 0;">0.05</div>
<div class="t" style="left:1289.5px;top:770.3px;font-size:18px;color:#d0d0d0;transform:scaleX(0.8420);transform-origin:0 0;">0.05</div>
<div class="t" style="left:1222.1px;top:647.3px;font-size:18px;color:#d0d0d0;transform:scaleX(0.8392);transform-origin:0 0;">0.1</div>
<div class="t" style="left:1348.6px;top:770.3px;font-size:18px;color:#d0d0d0;transform:scaleX(0.8392);transform-origin:0 0;">0.1</div>
<div class="t" style="left:1213.6px;top:596.1px;font-size:18px;color:#d0d0d0;transform:scaleX(0.8420);transform-origin:0 0;">0.15</div>
<div class="t" style="left:1399.2px;top:770.3px;font-size:18px;color:#d0d0d0;transform:scaleX(0.8420);transform-origin:0 0;">0.15</div>
<div class="t" style="left:1222.1px;top:545.0px;font-size:18px;color:#d0d0d0;transform:scaleX(0.8392);transform-origin:0 0;">0.2</div>
<div class="t" style="left:1458.2px;top:770.3px;font-size:18px;color:#d0d0d0;transform:scaleX(0.8392);transform-origin:0 0;">0.2</div>
<div class="t" style="left:1213.6px;top:493.8px;font-size:18px;color:#d0d0d0;transform:scaleX(0.8420);transform-origin:0 0;">0.25</div>
<div class="t" style="left:1508.8px;top:770.3px;font-size:18px;color:#d0d0d0;transform:scaleX(0.8420);transform-origin:0 0;">0.25</div>
<div class="t" style="left:1222.1px;top:442.7px;font-size:18px;color:#d0d0d0;transform:scaleX(0.8392);transform-origin:0 0;">0.3</div>
<div class="t" style="left:1567.8px;top:770.3px;font-size:18px;color:#d0d0d0;transform:scaleX(0.8392);transform-origin:0 0;">0.3</div>
<div class="t" style="left:1213.6px;top:391.5px;font-size:18px;color:#d0d0d0;transform:scaleX(0.8420);transform-origin:0 0;">0.35</div>
<div class="t" style="left:1618.3px;top:770.3px;font-size:18px;color:#d0d0d0;transform:scaleX(0.8420);transform-origin:0 0;">0.35</div>
<div class="t" style="left:1222.1px;top:340.4px;font-size:18px;color:#d0d0d0;transform:scaleX(0.8392);transform-origin:0 0;">0.4</div>
<div class="t" style="left:1677.4px;top:770.3px;font-size:18px;color:#d0d0d0;transform:scaleX(0.8392);transform-origin:0 0;">0.4</div>
<div class="t" style="left:1213.6px;top:289.2px;font-size:18px;color:#d0d0d0;transform:scaleX(0.8420);transform-origin:0 0;">0.45</div>
<div class="t" style="left:1728.0px;top:770.3px;font-size:18px;color:#d0d0d0;transform:scaleX(0.8420);transform-origin:0 0;">0.45</div>
<div class="t" style="left:1222.1px;top:238.1px;font-size:18px;color:#d0d0d0;transform:scaleX(0.8392);transform-origin:0 0;">0.5</div>
<div class="t" style="left:1787.0px;top:770.3px;font-size:18px;color:#d0d0d0;transform:scaleX(0.8392);transform-origin:0 0;">0.5</div>
<div class="t" style="left:1213.6px;top:186.9px;font-size:18px;color:#d0d0d0;transform:scaleX(0.8420);transform-origin:0 0;">0.55</div>
<div class="t" style="left:1837.6px;top:770.3px;font-size:18px;color:#d0d0d0;transform:scaleX(0.8420);transform-origin:0 0;">0.55</div>
<svg style="left:0;top:0" width="1920" height="1170"><rect x="1324.5" y="160.0" width="15" height="15" fill="none" stroke="#fff" stroke-width="1.7"/><rect x="1341.7" y="173.1" width="15" height="15" fill="none" stroke="#fff" stroke-width="1.7"/><rect x="1361.2" y="190.4" width="15" height="15" fill="none" stroke="#fff" stroke-width="1.7"/><rect x="1386.4" y="211.0" width="15" height="15" fill="none" stroke="#fff" stroke-width="1.7"/><rect x="1417.5" y="235.7" width="15" height="15" fill="none" stroke="#fff" stroke-width="1.7"/><rect x="1464.7" y="177.2" width="15" height="15" fill="none" stroke="#fff" stroke-width="1.7"/><rect x="1464.7" y="193.7" width="15" height="15" fill="none" stroke="#fff" stroke-width="1.7"/><rect x="1463.2" y="209.5" width="15" height="15" fill="none" stroke="#fff" stroke-width="1.7"/><rect x="1461.7" y="226.7" width="15" height="15" fill="none" stroke="#fff" stroke-width="1.7"/><rect x="1461.0" y="247.0" width="15" height="15" fill="none" stroke="#fff" stroke-width="1.7"/><rect x="1508.2" y="259.7" width="15" height="15" fill="none" stroke="#fff" stroke-width="1.7"/><rect x="1561.8" y="250.0" width="15" height="15" fill="none" stroke="#fff" stroke-width="1.7"/><rect x="1617.7" y="238.0" width="15" height="15" fill="none" stroke="#fff" stroke-width="1.7"/><rect x="1676.9" y="226.0" width="15" height="15" fill="none" stroke="#fff" stroke-width="1.7"/><rect x="1735.5" y="213.6" width="15" height="15" fill="none" stroke="#fff" stroke-width="1.7"/><rect x="1357.5" y="290.1" width="15" height="15" fill="none" stroke="#fff" stroke-width="1.7"/><rect x="1377.7" y="285.6" width="15" height="15" fill="none" stroke="#fff" stroke-width="1.7"/><rect x="1398.0" y="281.1" width="15" height="15" fill="none" stroke="#fff" stroke-width="1.7"/><rect x="1416.0" y="278.1" width="15" height="15" fill="none" stroke="#fff" stroke-width="1.7"/><rect x="1437.0" y="274.4" width="15" height="15" fill="none" stroke="#fff" stroke-width="1.7"/><rect x="1455.0" y="308.8" width="15" height="15" fill="none" stroke="#fff" stroke-width="1.7"/><rect x="1452.0" y="357.2" width="15" height="15" fill="none" stroke="#fff" stroke-width="1.7"/><rect x="1446.7" y="414.2" width="15" height="15" fill="none" stroke="#fff" stroke-width="1.7"/><rect x="1443.0" y="483.6" width="15" height="15" fill="none" stroke="#fff" stroke-width="1.7"/><rect x="1434.3" y="588.1" width="15" height="15" fill="none" stroke="#fff" stroke-width="1.7"/><rect x="1478.6" y="286.7" width="15" height="15" fill="none" stroke="#fff" stroke-width="1.7"/><rect x="1503.7" y="307.3" width="15" height="15" fill="none" stroke="#fff" stroke-width="1.7"/><rect x="1528.1" y="328.0" width="15" height="15" fill="none" stroke="#fff" stroke-width="1.7"/><rect x="1559.9" y="353.1" width="15" height="15" fill="none" stroke="#fff" stroke-width="1.7"/><rect x="1598.2" y="384.2" width="15" height="15" fill="none" stroke="#fff" stroke-width="1.7"/><ellipse cx="1329.7" cy="169" rx="4.7" ry="5.6" fill="#10a010" stroke="#000" stroke-width="1.25"/><ellipse cx="1353.4" cy="185.9" rx="4.7" ry="5.6" fill="#50b850" stroke="#000" stroke-width="1.25"/><ellipse cx="1375.9" cy="205.7" rx="4.7" ry="5.6" fill="#60b860" stroke="#000" stroke-width="1.25"/><ellipse cx="1401" cy="224.9" rx="4.7" ry="5.6" fill="#70b070" stroke="#000" stroke-width="1.25"/><ellipse cx="1433.2" cy="250.7" rx="4.7" ry="5.6" fill="#90b890" stroke="#000" stroke-width="1.25"/><ellipse cx="1470.7" cy="185.5" rx="4.7" ry="5.6" fill="#c0c020" stroke="#000" stroke-width="1.25"/><ellipse cx="1470" cy="203.1" rx="4.7" ry="5.6" fill="#b8b840" stroke="#000" stroke-width="1.25"/><ellipse cx="1468.5" cy="217" rx="4.7" ry="5.6" fill="#b0b060" stroke="#000" stroke-width="1.25"/><ellipse cx="1467" cy="233.9" rx="4.7" ry="5.6" fill="#b0b080" stroke="#000" stroke-width="1.25"/><ellipse cx="1467" cy="253.7" rx="4.7" ry="5.6" fill="#b0b098" stroke="#000" stroke-width="1.25"/><ellipse cx="1531.8" cy="263.9" rx="4.7" ry="5.6" fill="#b08080" stroke="#000" stroke-width="1.25"/><ellipse cx="1592.6" cy="251.1" rx="4.7" ry="5.6" fill="#b07070" stroke="#000" stroke-width="1.25"/><ellipse cx="1642.5" cy="239.9" rx="4.7" ry="5.6" fill="#b06060" stroke="#000" stroke-width="1.25"/><ellipse cx="1694.2" cy="230.1" rx="4.7" ry="5.6" fill="#b05050" stroke="#000" stroke-width="1.25"/><ellipse cx="1743" cy="221.9" rx="4.7" ry="5.6" fill="#b01010" stroke="#000" stroke-width="1.25"/><ellipse cx="1363.1" cy="298" rx="4.7" ry="5.6" fill="#10b0b8" stroke="#000" stroke-width="1.25"/><ellipse cx="1386.7" cy="293.1" rx="4.7" ry="5.6" fill="#50b0b8" stroke="#000" stroke-width="1.25"/><ellipse cx="1406.2" cy="287.5" rx="4.7" ry="5.6" fill="#70b0b0" stroke="#000" stroke-width="1.25"/><ellipse cx="1427.6" cy="285.6" rx="4.7" ry="5.6" fill="#90b8b8" stroke="#000" stroke-width="1.25"/><ellipse cx="1445.6" cy="280.7" rx="4.7" ry="5.6" fill="#a0b0b0" stroke="#000" stroke-width="1.25"/><ellipse cx="1463.2" cy="315.6" rx="4.7" ry="5.6" fill="#9090b0" stroke="#000" stroke-width="1.25"/><ellipse cx="1459.5" cy="365.8" rx="4.7" ry="5.6" fill="#7070b0" stroke="#000" stroke-width="1.25"/><ellipse cx="1455.3" cy="423.2" rx="4.7" ry="5.6" fill="#5050c0" stroke="#000" stroke-width="1.25"/><ellipse cx="1452" cy="502" rx="4.7" ry="5.6" fill="#4040c0" stroke="#000" stroke-width="1.25"/><ellipse cx="1444.8" cy="605.7" rx="4.7" ry="5.6" fill="#1010c0" stroke="#000" stroke-width="1.25"/><ellipse cx="1489.5" cy="296.5" rx="4.7" ry="5.6" fill="#b090b0" stroke="#000" stroke-width="1.25"/><ellipse cx="1517.2" cy="318.2" rx="4.7" ry="5.6" fill="#b080b8" stroke="#000" stroke-width="1.25"/><ellipse cx="1542.7" cy="338.8" rx="4.7" ry="5.6" fill="#b070c0" stroke="#000" stroke-width="1.25"/><ellipse cx="1570.4" cy="362.5" rx="4.7" ry="5.6" fill="#b060c0" stroke="#000" stroke-width="1.25"/><ellipse cx="1611.7" cy="391.7" rx="4.7" ry="5.6" fill="#a030c0" stroke="#000" stroke-width="1.25"/><rect x="1458" y="269.5" width="15" height="15" fill="none" stroke="#000" stroke-width="2.2"/><ellipse cx="1465.5" cy="277" rx="4.7" ry="5.6" fill="#fff" stroke="#000" stroke-width="1.25"/><ellipse cx="1438.5" cy="313" rx="5" ry="5.5" fill="#000"/><rect x="1681" y="566" width="223" height="184" fill="#2a2a2a"/><rect x="1683.5" y="568.5" width="218" height="178" fill="none" stroke="#9a9a9a" stroke-width="2.5"/><defs><linearGradient id="ing" gradientUnits="userSpaceOnUse" x1="1685" y1="575" x2="1901" y2="741"><stop offset="0" stop-color="#a0ff00"/><stop offset=".5" stop-color="#ffff00"/><stop offset=".75" stop-color="#ffe000"/><stop offset="1" stop-color="#ffb000"/></linearGradient></defs><rect x="1685" y="570" width="216" height="176" fill="url(#ing)"/><path d="M1685 570H1901V736L1685 578.8Z" fill="#000" opacity=".42"/><ellipse cx="1773.8" cy="657" rx="4.8" ry="5.5" fill="#b8b810" stroke="#000" stroke-width="1.5"/><rect x="1785" y="649" width="15" height="16.5" fill="none" stroke="#fff" stroke-width="2"/></svg>
<script>
(function(){
var cv=document.getElementById('cie');if(!cv||!cv.getContext)return;var ctx=cv.getContext('2d');
var W=658,H=614,OX=1250,OY=144,PX0=1249.5,PU=1096,PV0=758,PVU=1023,K=0.6,GM=1.2;
var L=[0.1741,0.0050,0.1738,0.0049,0.1733,0.0048,0.1726,0.0048,0.1714,0.0051,0.1689,0.0069,0.1644,0.0109,0.1566,0.0177,0.1440,0.0297,0.1355,0.0399,0.1241,0.0578,0.1096,0.0868,0.0913,0.1327,0.0687,0.2007,0.0454,0.2950,0.0235,0.4127,0.0082,0.5384,0.0039,0.6548,0.0139,0.7502,0.0389,0.8120,0.0743,0.8338,0.1142,0.8262,0.1547,0.8059,0.1929,0.7816,0.2296,0.7543,0.2658,0.7243,0.3016,0.6923,0.3373,0.6589,0.3731,0.6245,0.4087,0.5896,0.4441,0.5547,0.4788,0.5202,0.5125,0.4866,0.5448,0.4544,0.5752,0.4242,0.6029,0.3965,0.6270,0.3725,0.6482,0.3514,0.6658,0.3340,0.6801,0.3197,0.6915,0.3083,0.7006,0.2993,0.7079,0.2920,0.7140,0.2859,0.7190,0.2809,0.7260,0.2740,0.7347,0.2653];
var off=document.createElement('canvas');off.width=W;off.height=H;var oc=off.getContext('2d');var id=oc.createImageData(W,H),D=id.data;
for(var j=0;j<H;j++){var v=(PV0-(j+OY+0.5))/PVU;if(v<0.002)v=0.002;
for(var i=0;i<W;i++){var u=(i+OX+0.5-PX0)/PU;
var den=6*u-16*v+12,x=9*u/den,y=4*v/den,X=x/y,Z=(1-x-y)/y;
var r=2.041369*X-0.5649464-0.3446944*Z,g=-0.969266*X+1.8760108+0.041556*Z,b=0.0134474*X-0.1183897+1.0154096*Z;
var o=(r<0||g<0||b<0);if(r<0)r=0;if(g<0)g=0;if(b<0)b=0;var m=Math.max(r,g,b)||1;
r=Math.pow(r/m,GM);g=Math.pow(g/m,GM);b=Math.pow(b/m,GM);if(o){r*=K;g*=K;b*=K;}
var q=(j*W+i)*4;D[q]=r*255;D[q+1]=g*255;D[q+2]=b*255;D[q+3]=255;}}
oc.putImageData(id,0,0);
var P=[];for(var k=0;k<L.length;k+=2){var xx=L[k],yy=L[k+1],d=-2*xx+12*yy+3,uu=4*xx/d,vv=9*yy/d;P.push([uu*PU+PX0-OX,PV0-vv*PVU-OY]);}
var n=P.length;ctx.beginPath();function md(a,b){return [(a[0]+b[0])/2,(a[1]+b[1])/2];}
var m0=md(P[n-1],P[0]);ctx.moveTo(m0[0],m0[1]);
for(var k=0;k<n;k++){var a=P[k],b=P[(k+1)%n],mm=md(a,b);ctx.quadraticCurveTo(a[0],a[1],mm[0],mm[1]);}
ctx.closePath();ctx.clip();ctx.drawImage(off,0,0);var fb=document.getElementById('ciefb');if(fb)fb.style.display='none';
})();
</script>
<div class="t" style="left:252.3px;top:812.1px;font-size:35px;color:#f2f2f2;transform:scaleX(0.8644);transform-origin:0 0;">Avg dE2000: 1.28</div>
<div class="t" style="left:248.3px;top:862.4px;font-size:35px;color:#f2f2f2;transform:scaleX(0.8765);transform-origin:0 0;">Max dE2000: 3.46</div>
<div class="t" style="left:216.0px;top:922.1px;font-size:35px;color:#f2f2f2;transform:scaleX(0.8749);transform-origin:0 0;">Current Reading</div>
<div class="t" style="left:216.0px;top:973.0px;font-size:28px;color:#f2f2f2;transform:scaleX(0.9004);transform-origin:0 0;">x: 0.423</div>
<div class="t" style="left:376.7px;top:973.0px;font-size:28px;color:#f2f2f2;transform:scaleX(0.9175);transform-origin:0 0;">y: 0.5183</div>
<div class="t" style="left:216.0px;top:1023.6px;font-size:28px;color:#f2f2f2;transform:scaleX(0.9020);transform-origin:0 0;">fL: 65.58</div>
<div class="t" style="left:216.0px;top:1066.3px;font-size:28px;color:#f2f2f2;transform:scaleX(0.9521);transform-origin:0 0;">cd/m&sup2;: 224.69</div>
<div class="t" style="left:638.7px;top:829.2px;font-size:17.5px;color:#d8d8d8;transform:scaleX(0.8017);transform-origin:0 0;">RGB Balance</div>
<svg style="left:0;top:0" width="1920" height="1170"><rect x="564.2" y="850.6" width="260.9" height="224.4999999999999" fill="#232323"/><path d="M564.2 907.7H825.1" stroke="#8a8a8a" stroke-width="1.6"/><path d="M564.2 963.8H825.1" stroke="#8a8a8a" stroke-width="1.6"/><path d="M564.2 1019.9H825.1" stroke="#8a8a8a" stroke-width="1.6"/><path d="M564.2 1075.1V850.6H825.1V1075.1" fill="none" stroke="#9a9a9a" stroke-width="1.6"/><path d="M564.2 851.6H825.1" stroke="#9a9a9a" stroke-width="3"/><path d="M559.2 1075.1H825.1" stroke="#b0b0b0" stroke-width="1.6"/><path d="M564.2 1075.1v7M825.1 1075.1v7" stroke="#b0b0b0" stroke-width="1.6"/><path d="M559.2 851.5H564.2" stroke="#c8c8c8" stroke-width="1.6"/><path d="M559.2 907.7H564.2" stroke="#c8c8c8" stroke-width="1.6"/><path d="M559.2 963.8H564.2" stroke="#c8c8c8" stroke-width="1.6"/><path d="M559.2 1019.9H564.2" stroke="#c8c8c8" stroke-width="1.6"/><path d="M559.2 1076.0H564.2" stroke="#c8c8c8" stroke-width="1.6"/><defs><linearGradient id="rbR" x1="0" x2="0" y1="0" y2="1"><stop offset="0" stop-color="#ff2020"/><stop offset="1" stop-color="#c00000"/></linearGradient><linearGradient id="rbG" x1="0" x2="0" y1="0" y2="1"><stop offset="0" stop-color="#10a010"/><stop offset="1" stop-color="#006000"/></linearGradient><linearGradient id="rbB" x1="0" x2="0" y1="0" y2="1"><stop offset="0" stop-color="#0000ff"/><stop offset=".6" stop-color="#0000f0"/><stop offset="1" stop-color="#000090"/></linearGradient></defs><rect x="591" y="963" width="69.5" height="6.5" fill="#000"/><rect x="592.3" y="964.3" width="67" height="3.9" fill="url(#rbR)"/><rect x="661.3" y="955" width="68.5" height="9" fill="#000"/><rect x="662.6" y="956.3" width="66" height="6.4" fill="url(#rbG)"/><rect x="731.5" y="906" width="69" height="58" fill="#000"/><rect x="732.8" y="907.3" width="66.4" height="55.4" fill="url(#rbB)"/></svg>
<div class="t" style="left:540.4px;top:842.2px;font-size:19.5px;color:#d0d0d0;transform:scaleX(0.8667);transform-origin:0 0;">20</div>
<div class="t" style="left:540.4px;top:898.4px;font-size:19.5px;color:#d0d0d0;transform:scaleX(0.8667);transform-origin:0 0;">10</div>
<div class="t" style="left:549.8px;top:954.5px;font-size:19.5px;color:#d0d0d0;transform:scaleX(0.8667);transform-origin:0 0;">0</div>
<div class="t" style="left:535.2px;top:1010.6px;font-size:19.5px;color:#d0d0d0;transform:scaleX(0.8515);transform-origin:0 0;">-10</div>
<div class="t" style="left:535.2px;top:1066.7px;font-size:19.5px;color:#d0d0d0;transform:scaleX(0.8515);transform-origin:0 0;">-20</div>
<div class="t" style="left:676.3px;top:1080.0px;font-size:19.5px;color:#d8d8d8;transform:scaleX(0.7539);transform-origin:0 0;">100%</div>
<div class="a" style="left:848px;top:812px;width:20px;height:36px;background:#000;"></div>
<div class="a" style="left:868px;top:812px;width:723px;height:18px;background:#2e2e2e;"></div>
<div class="a" style="left:868px;top:830px;width:723px;height:18px;background:#141414;"></div>
<div class="t" style="left:1039.0px;top:821.1px;font-size:19.5px;color:#f4f4f4;transform:scaleX(1.0505);transform-origin:0 0;letter-spacing:0px;">20%</div>
<div class="t" style="left:1150.8px;top:821.1px;font-size:19.5px;color:#f4f4f4;transform:scaleX(1.0505);transform-origin:0 0;letter-spacing:0px;">40%</div>
<div class="t" style="left:1262.4px;top:821.1px;font-size:19.5px;color:#f4f4f4;transform:scaleX(1.0505);transform-origin:0 0;letter-spacing:0px;">60%</div>
<div class="t" style="left:1374.0px;top:821.1px;font-size:19.5px;color:#f4f4f4;transform:scaleX(1.0505);transform-origin:0 0;letter-spacing:0px;">80%</div>
<div class="t" style="left:1485.7px;top:821.1px;font-size:19.5px;color:#f4f4f4;transform:scaleX(1.1028);transform-origin:0 0;letter-spacing:0px;">100%</div>
<div class="a" style="left:848px;top:848px;width:20px;height:32px;background:linear-gradient(90deg,#1e1e1e,#2c2c2c);"></div>
<div class="a" style="left:868px;top:848px;width:723px;height:32px;background:#404040;"></div>
<div class="t" style="left:874.8px;top:854.4px;font-size:20px;color:#f4f4f4;transform:scaleX(1.0691);transform-origin:0 0;">x: CIE31</div>
<div class="t" style="left:1039.0px;top:854.4px;font-size:20px;color:#f4f4f4;transform:scaleX(1.1361);transform-origin:0 0;">0.3361</div>
<div class="t" style="left:1150.8px;top:854.4px;font-size:20px;color:#f4f4f4;transform:scaleX(1.1361);transform-origin:0 0;">0.3566</div>
<div class="t" style="left:1262.4px;top:854.4px;font-size:20px;color:#f4f4f4;transform:scaleX(1.1361);transform-origin:0 0;">0.3792</div>
<div class="t" style="left:1374.0px;top:854.4px;font-size:20px;color:#f4f4f4;transform:scaleX(1.1361);transform-origin:0 0;">0.3989</div>
<div class="t" style="left:1485.7px;top:854.4px;font-size:20px;color:#f4f4f4;transform:scaleX(1.1361);transform-origin:0 0;">0.4230</div>
<div class="a" style="left:848px;top:880px;width:20px;height:33px;background:linear-gradient(90deg,#1e1e1e,#2c2c2c);"></div>
<div class="a" style="left:868px;top:880px;width:723px;height:33px;background:#808080;"></div>
<div class="t" style="left:874.8px;top:886.7px;font-size:20px;color:#f4f4f4;transform:scaleX(1.0691);transform-origin:0 0;">y: CIE31</div>
<div class="t" style="left:1039.0px;top:886.7px;font-size:20px;color:#f4f4f4;transform:scaleX(1.1361);transform-origin:0 0;">0.3691</div>
<div class="t" style="left:1150.8px;top:886.7px;font-size:20px;color:#f4f4f4;transform:scaleX(1.1361);transform-origin:0 0;">0.4061</div>
<div class="t" style="left:1262.4px;top:886.7px;font-size:20px;color:#f4f4f4;transform:scaleX(1.1361);transform-origin:0 0;">0.4442</div>
<div class="t" style="left:1374.0px;top:886.7px;font-size:20px;color:#f4f4f4;transform:scaleX(1.1361);transform-origin:0 0;">0.4776</div>
<div class="t" style="left:1485.7px;top:886.7px;font-size:20px;color:#f4f4f4;transform:scaleX(1.1361);transform-origin:0 0;">0.5183</div>
<div class="a" style="left:848px;top:913px;width:20px;height:32px;background:linear-gradient(90deg,#1e1e1e,#2c2c2c);"></div>
<div class="a" style="left:868px;top:913px;width:723px;height:32px;background:#404040;"></div>
<div class="t" style="left:874.8px;top:919.0px;font-size:20px;color:#f4f4f4;transform:scaleX(0.9520);transform-origin:0 0;">Y</div>
<div class="t" style="left:1039.0px;top:919.0px;font-size:20px;color:#f4f4f4;transform:scaleX(1.1352);transform-origin:0 0;">236.2657</div>
<div class="t" style="left:1150.8px;top:919.0px;font-size:20px;color:#f4f4f4;transform:scaleX(1.1352);transform-origin:0 0;">231.9003</div>
<div class="t" style="left:1262.4px;top:919.0px;font-size:20px;color:#f4f4f4;transform:scaleX(1.1352);transform-origin:0 0;">228.9328</div>
<div class="t" style="left:1374.0px;top:919.0px;font-size:20px;color:#f4f4f4;transform:scaleX(1.1352);transform-origin:0 0;">226.7375</div>
<div class="t" style="left:1485.7px;top:919.0px;font-size:20px;color:#f4f4f4;transform:scaleX(1.1352);transform-origin:0 0;">224.6918</div>
<div class="a" style="left:848px;top:945px;width:20px;height:32px;background:linear-gradient(90deg,#1e1e1e,#2c2c2c);"></div>
<div class="a" style="left:868px;top:945px;width:723px;height:32px;background:#808080;"></div>
<div class="t" style="left:874.8px;top:951.3px;font-size:20px;color:#f4f4f4;transform:scaleX(1.1188);transform-origin:0 0;">Target x:CIE31</div>
<div class="t" style="left:1039.0px;top:951.3px;font-size:20px;color:#f4f4f4;transform:scaleX(1.1361);transform-origin:0 0;">0.3352</div>
<div class="t" style="left:1150.8px;top:951.3px;font-size:20px;color:#f4f4f4;transform:scaleX(1.1361);transform-origin:0 0;">0.3587</div>
<div class="t" style="left:1262.4px;top:951.3px;font-size:20px;color:#f4f4f4;transform:scaleX(1.1361);transform-origin:0 0;">0.3816</div>
<div class="t" style="left:1374.0px;top:951.3px;font-size:20px;color:#f4f4f4;transform:scaleX(1.1361);transform-origin:0 0;">0.4048</div>
<div class="t" style="left:1485.7px;top:951.3px;font-size:20px;color:#f4f4f4;transform:scaleX(1.1361);transform-origin:0 0;">0.4271</div>
<div class="a" style="left:848px;top:977px;width:20px;height:33px;background:linear-gradient(90deg,#1e1e1e,#2c2c2c);"></div>
<div class="a" style="left:868px;top:977px;width:723px;height:33px;background:#404040;"></div>
<div class="t" style="left:874.8px;top:983.6px;font-size:20px;color:#f4f4f4;transform:scaleX(1.1263);transform-origin:0 0;">Target y:CIE31</div>
<div class="t" style="left:1039.0px;top:983.6px;font-size:20px;color:#f4f4f4;transform:scaleX(1.1361);transform-origin:0 0;">0.3662</div>
<div class="t" style="left:1150.8px;top:983.6px;font-size:20px;color:#f4f4f4;transform:scaleX(1.1361);transform-origin:0 0;">0.4050</div>
<div class="t" style="left:1262.4px;top:983.6px;font-size:20px;color:#f4f4f4;transform:scaleX(1.1361);transform-origin:0 0;">0.4429</div>
<div class="t" style="left:1374.0px;top:983.6px;font-size:20px;color:#f4f4f4;transform:scaleX(1.1361);transform-origin:0 0;">0.4813</div>
<div class="t" style="left:1485.7px;top:983.6px;font-size:20px;color:#f4f4f4;transform:scaleX(1.1361);transform-origin:0 0;">0.5181</div>
<div class="a" style="left:848px;top:1010px;width:20px;height:32px;background:linear-gradient(90deg,#1e1e1e,#2c2c2c);"></div>
<div class="a" style="left:868px;top:1010px;width:723px;height:32px;background:#808080;"></div>
<div class="t" style="left:874.8px;top:1015.9px;font-size:20px;color:#f4f4f4;transform:scaleX(1.1440);transform-origin:0 0;">Target Y</div>
<div class="t" style="left:1039.0px;top:1015.9px;font-size:20px;color:#f4f4f4;transform:scaleX(1.1352);transform-origin:0 0;">235.9008</div>
<div class="t" style="left:1150.8px;top:1015.9px;font-size:20px;color:#f4f4f4;transform:scaleX(1.1352);transform-origin:0 0;">231.5601</div>
<div class="t" style="left:1262.4px;top:1015.9px;font-size:20px;color:#f4f4f4;transform:scaleX(1.1352);transform-origin:0 0;">228.1776</div>
<div class="t" style="left:1374.0px;top:1015.9px;font-size:20px;color:#f4f4f4;transform:scaleX(1.1352);transform-origin:0 0;">225.3614</div>
<div class="t" style="left:1485.7px;top:1015.9px;font-size:20px;color:#f4f4f4;transform:scaleX(1.1352);transform-origin:0 0;">223.1087</div>
<div class="a" style="left:848px;top:1042px;width:20px;height:32px;background:linear-gradient(90deg,#1e1e1e,#2c2c2c);"></div>
<div class="a" style="left:868px;top:1042px;width:723px;height:32px;background:#404040;"></div>
<div class="t" style="left:874.8px;top:1048.2px;font-size:20px;color:#f4f4f4;transform:scaleX(1.1205);transform-origin:0 0;">&#916;E 2000</div>
<div class="t" style="left:1039.0px;top:1048.2px;font-size:20px;color:#f4f4f4;transform:scaleX(1.1361);transform-origin:0 0;">0.8186</div>
<div class="t" style="left:1150.8px;top:1048.2px;font-size:20px;color:#f4f4f4;transform:scaleX(1.1361);transform-origin:0 0;">0.7906</div>
<div class="t" style="left:1262.4px;top:1048.2px;font-size:20px;color:#f4f4f4;transform:scaleX(1.1361);transform-origin:0 0;">0.7570</div>
<div class="t" style="left:1374.0px;top:1048.2px;font-size:20px;color:#f4f4f4;transform:scaleX(1.1644);transform-origin:0 0;">1.1139</div>
<div class="t" style="left:1485.7px;top:1048.2px;font-size:20px;color:#f4f4f4;transform:scaleX(1.1361);transform-origin:0 0;">0.8570</div>
<div class="a" style="left:848px;top:1074px;width:20px;height:32px;background:linear-gradient(90deg,#1e1e1e,#2c2c2c);"></div>
<div class="a" style="left:868px;top:1074px;width:723px;height:32px;background:#808080;"></div>
<div class="t" style="left:874.8px;top:1080.5px;font-size:20px;color:#f4f4f4;transform:scaleX(1.0544);transform-origin:0 0;">dEITP</div>
<div class="t" style="left:1039.0px;top:1080.5px;font-size:20px;color:#f4f4f4;transform:scaleX(1.1361);transform-origin:0 0;">1.1976</div>
<div class="t" style="left:1150.8px;top:1080.5px;font-size:20px;color:#f4f4f4;transform:scaleX(1.1361);transform-origin:0 0;">1.4332</div>
<div class="t" style="left:1262.4px;top:1080.5px;font-size:20px;color:#f4f4f4;transform:scaleX(1.1361);transform-origin:0 0;">1.5751</div>
<div class="t" style="left:1374.0px;top:1080.5px;font-size:20px;color:#f4f4f4;transform:scaleX(1.1361);transform-origin:0 0;">4.1632</div>
<div class="t" style="left:1485.7px;top:1080.5px;font-size:20px;color:#f4f4f4;transform:scaleX(1.1361);transform-origin:0 0;">2.6787</div>
<div class="a" style="left:200px;top:1107px;width:1720px;height:63px;background:linear-gradient(#3c3c3c,#262626 60%,#1c1c1c)"></div>
<div class="a" style="left:201px;top:1108px;width:45px;height:62px;border-radius:4px 4px 0 0;background:linear-gradient(#a8a8a8,#888 40%,#5a5a5a)"></div>
<svg style="left:214px;top:1108px" width="20" height="20"><circle cx="9.4" cy="8.6" r="7.5" fill="#5a5a5a"/><path d="M5.5 11h8l-4-4.5z" fill="#222"/></svg>
<div class="a" style="left:206px;top:1134px;width:35px;height:30px;background:#ffff00;border-radius:3px"></div>
<div class="a" style="left:252px;top:1108px;width:150px;height:61px;border-radius:4px;background:linear-gradient(#aaa,#8a8a8a 30%,#6a6a6a 70%,#5a5a5a)"></div>
<div class="a" style="left:257.5px;top:1113px;width:139.5px;height:36px;border-radius:3px;background:#c3c4a6;box-shadow:inset 0 1px 1px rgba(0,0,0,.25)"></div>
<div class="t" style="left:316.5px;top:1154.6px;font-size:10.5px;color:#2a2a2a;-webkit-text-stroke:0.3px #2a2a2a;">20%</div>
<div class="a" style="left:404px;top:1108px;width:150px;height:61px;border-radius:4px;background:linear-gradient(#aaa,#8a8a8a 30%,#6a6a6a 70%,#5a5a5a)"></div>
<div class="a" style="left:409.5px;top:1113px;width:139.5px;height:36px;border-radius:3px;background:#c2c385;box-shadow:inset 0 1px 1px rgba(0,0,0,.25)"></div>
<div class="t" style="left:468.5px;top:1154.6px;font-size:10.5px;color:#2a2a2a;-webkit-text-stroke:0.3px #2a2a2a;">40%</div>
<div class="a" style="left:556px;top:1108px;width:150px;height:61px;border-radius:4px;background:linear-gradient(#aaa,#8a8a8a 30%,#6a6a6a 70%,#5a5a5a)"></div>
<div class="a" style="left:561.5px;top:1113px;width:139.5px;height:36px;border-radius:3px;background:#c3c36a;box-shadow:inset 0 1px 1px rgba(0,0,0,.25)"></div>
<div class="t" style="left:620.5px;top:1154.6px;font-size:10.5px;color:#2a2a2a;-webkit-text-stroke:0.3px #2a2a2a;">60%</div>
<div class="a" style="left:708px;top:1108px;width:150px;height:61px;border-radius:4px;background:linear-gradient(#aaa,#8a8a8a 30%,#6a6a6a 70%,#5a5a5a)"></div>
<div class="a" style="left:713.5px;top:1113px;width:139.5px;height:36px;border-radius:3px;background:#c2bf44;box-shadow:inset 0 1px 1px rgba(0,0,0,.25)"></div>
<div class="t" style="left:772.5px;top:1154.6px;font-size:10.5px;color:#2a2a2a;-webkit-text-stroke:0.3px #2a2a2a;">80%</div>
<div class="a" style="left:860px;top:1108px;width:150px;height:61px;border-radius:4px;background:linear-gradient(#1c1c1c 0,#1c1c1c 5px,#383838 5px,#333)"></div>
<div class="a" style="left:865.5px;top:1113px;width:139px;height:36px;border-radius:3px;background:#c4c200"></div>
<div class="t" style="left:920.5px;top:1154.6px;font-size:10.5px;color:#fff;font-weight:bold;transform:scaleX(1.0054);transform-origin:0 0;">100%</div>
<div class="a" style="left:1597px;top:1127px;width:48px;height:43px;border-radius:4px 4px 0 0;background:linear-gradient(#8a8a8a,#5c5c5c)"></div>
<div class="a" style="left:1606px;top:1133px;width:30px;height:30px;border:2.5px solid #333;border-radius:4px;background:linear-gradient(#9a9a9a,#777)"></div>
<div class="a" style="left:1613px;top:1140px;width:16px;height:15px;background:#000;"></div>
<div class="a" style="left:1645px;top:1108px;width:227px;height:30px;background:linear-gradient(#6e6e6e,#505050);border-radius:4px 4px 0 0"></div>
<div class="a" style="left:1692.5px;top:1109px;width:1px;height:28px;background:#3e3e3e;"></div>
<div class="a" style="left:1737px;top:1109px;width:1px;height:28px;background:#3e3e3e;"></div>
<div class="a" style="left:1782px;top:1109px;width:1px;height:28px;background:#3e3e3e;"></div>
<div class="a" style="left:1827px;top:1109px;width:1px;height:28px;background:#3e3e3e;"></div>
<svg style="left:1645px;top:1108px" width="275" height="30"><defs><radialGradient id="sbg" cx=".5" cy=".3" r=".6"><stop offset="0" stop-color="#8a8a8a"/><stop offset="1" stop-color="#5a5a5a"/></radialGradient></defs><circle cx="23" cy="16" r="9" fill="url(#sbg)"/><circle cx="68" cy="16" r="9" fill="url(#sbg)"/><circle cx="114" cy="16" r="9" fill="url(#sbg)"/><circle cx="159" cy="16" r="9" fill="url(#sbg)"/><circle cx="204" cy="16" r="9" fill="url(#sbg)"/><circle cx="249" cy="16" r="9" fill="url(#sbg)"/><path d="M19 12h5v8h-5z" fill="#222" opacity=".7"/><path d="M65 11l8 5-8 5z" fill="#222" opacity=".7"/></svg>
<div class="a" style="left:1872px;top:1108px;width:48px;height:30px;background:#2a2a2a"></div>
<div class="a" style="left:1646px;top:1139px;width:136px;height:31px;border-radius:4px 0 0 0;background:linear-gradient(#b0b0b0,#8a8a8a 50%,#6a6a6a)"></div>
<div class="a" style="left:1783px;top:1139px;width:137px;height:31px;border-radius:0 4px 0 0;background:linear-gradient(#b0b0b0,#8a8a8a 50%,#6a6a6a)"></div>
<svg style="left:1660px;top:1140px" width="260" height="30"><circle cx="16.8" cy="14" r="10" fill="#8a8a8a" stroke="#999" stroke-width=".5"/><path d="M18 9.5l-4 4.5 4 4.5M22 9.5l-4 4.5 4 4.5" fill="none" stroke="#333" stroke-width="1.6"/><circle cx="230.5" cy="14" r="10" fill="#8a8a8a" stroke="#999" stroke-width=".5"/><path d="M226 9.5l4 4.5-4 4.5M230 9.5l4 4.5-4 4.5" fill="none" stroke="#333" stroke-width="1.6"/></svg>
<div class="t" style="left:1703.5px;top:1143.9px;font-size:21px;color:#333;font-weight:bold;">Back</div>
<div class="t" style="left:1810.6px;top:1143.9px;font-size:21px;color:#333;font-weight:bold;transform:scaleX(1.1292);transform-origin:0 0;">Next</div>
<svg style="left:1530px;top:1080px" width="390" height="90" opacity=".85"><g fill="none" stroke-linejoin="round" stroke-linecap="round"><path d="M5 9.5L57.5 17.2L58.6 45.6L17 51.1L93.6 55.5L38.9 69.7L6.1 55.5Z" stroke="#e8b0b0" stroke-width="5" opacity=".5"/><path d="M5 9.5L57.5 17.2L58.6 45.6L17 51.1L93.6 55.5L38.9 69.7L6.1 55.5Z" stroke="#a8363e" stroke-width="3"/><path d="M19.2 23.8L33.4 44.5L63 7.3" stroke="#ccc" stroke-width="7" opacity=".6"/><path d="M19.2 23.8L33.4 44.5L63 7.3" stroke="#3a3a3a" stroke-width="5"/></g><text x="64" y="45.6" font-family="Liberation Sans" font-weight="bold" font-size="35" fill="#a03840" fill-opacity=".85" stroke="#e8b8b8" stroke-width="1.6" textLength="195" lengthAdjust="spacingAndGlyphs">NOTEBOOK</text><text x="259" y="45.6" font-family="Liberation Sans" font-weight="bold" font-size="35" fill="#303030" stroke="#d8d8d8" stroke-width="1.6" textLength="121" lengthAdjust="spacingAndGlyphs">CHECK</text></svg>
</body></html>
